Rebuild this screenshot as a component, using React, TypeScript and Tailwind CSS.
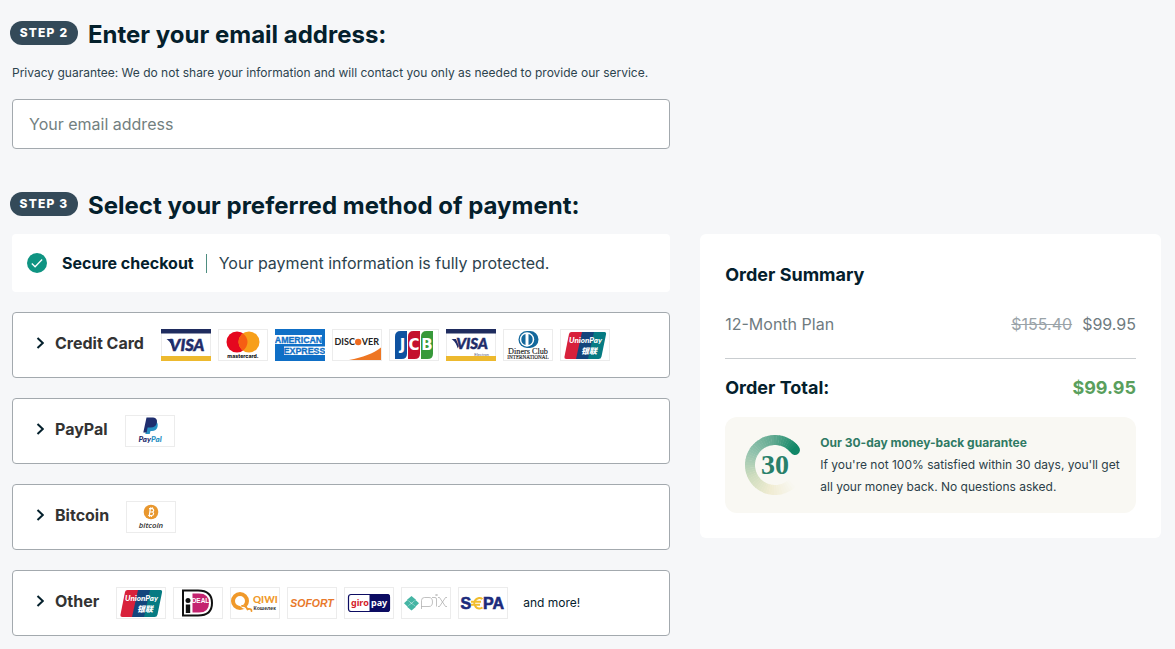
import { useState } from 'react';
import type { ReactNode } from 'react';
import clsx from 'clsx';

function Logo({ title, children, bare }: { title: string; children: ReactNode; bare?: boolean }) {
  return (
    <svg
      viewBox="0 0 50 32"
      role="img"
      aria-label={title}
      className={clsx('h-8 w-[50px] shrink-0 bg-white', !bare && 'outline outline-1 -outline-offset-1 outline-[#ececec]')}
    >
      {children}
    </svg>
  );
}

function VisaLogo({ electron }: { electron?: boolean }) {
  return (
    <Logo title={electron ? 'Visa Electron' : 'Visa'} bare>
      <rect x=".5" y=".5" width="49" height="31" fill="#fff" stroke="#ececec" />
      <rect width="50" height="4.5" fill="#1f2c5f" />
      <rect y="27" width="50" height="5" fill="#edb92e" />
      <path d="M5.500 10h4.500l2.800 7-1 2.500C10.300 14.500 8.500 12 5.500 10z" fill="#1f2c6a" />
      <text
        x="26"
        y={electron ? 20 : 21.5}
        textAnchor="middle"
        fontFamily="Lato, sans-serif"
        fontSize={electron ? 15 : 16.5}
        fontWeight="900"
        fontStyle="italic"
        fill="#1f2c6a"
        stroke="#1f2c6a"
        strokeWidth=".5"
      >
        VISA
      </text>
      {electron && (
        <text x="43" y="26.500" textAnchor="end" fontFamily="Liberation Sans, sans-serif" fontSize="4" fill="#55597a">
          Electron
        </text>
      )}
    </Logo>
  );
}

function MastercardLogo() {
  return (
    <Logo title="Mastercard">
      <circle cx="19" cy="13" r="10.500" fill="#e5071f" />
      <circle cx="31" cy="13" r="10.500" fill="#f79f1a" />
      <path d="M25 4.400a10.500 10.500 0 0 1 0 17.200a10.500 10.500 0 0 1 0-17.200z" fill="#f65e13" />
      <text x="25" y="28.500" textAnchor="middle" fontFamily="Inter, sans-serif" fontSize="5.200" fontWeight="800" fill="#1b1b1b">
        mastercard.
      </text>
    </Logo>
  );
}

function AmexLogo() {
  return (
    <Logo title="American Express" bare>
      <rect width="50" height="32" fill="#0f6fc6" />
      <rect y="6" width="47" height="9" fill="#fff" />
      <rect x="9" y="17.500" width="41" height="8.500" fill="#fff" />
      <g fontFamily="Liberation Sans, sans-serif" fontWeight="700" fill="#0f6fc6" stroke="#0f6fc6" strokeWidth=".3">
        <text x="23.500" y="13.600" textAnchor="middle" fontSize="8.800">
          AMERICAN
        </text>
        <text x="29.500" y="25" textAnchor="middle" fontSize="8.800">
          EXPRESS
        </text>
      </g>
    </Logo>
  );
}

function DiscoverLogo() {
  return (
    <Logo title="Discover">
      <path d="M49 18.500V31H17c14-2.500 24-6.500 32-12.500z" fill="#ee7623" />
      <g fontFamily="Lato, sans-serif" fontSize="9" fontWeight="700" fill="#222">
        <text x="2.500" y="16.300">
          DISC
        </text>
        <text x="47" y="16.300" textAnchor="end">
          VER
        </text>
      </g>
      <circle cx="26.200" cy="13" r="3.200" fill="#ee6b1f" />
    </Logo>
  );
}

function JcbLogo() {
  return (
    <Logo title="JCB">
      <path d="M11.500 2H18v22.500q0 5.500-5.500 5.500H6V7.500Q6 2 11.500 2z" fill="#0f52a0" />
      <path d="M24.500 2H31v22.500q0 5.500-5.500 5.500H19V7.500Q19 2 24.500 2z" fill="#c4122e" />
      <path d="M37.500 2H44v22.500q0 5.500-5.500 5.500H32V7.500Q32 2 37.500 2z" fill="#37993a" />
      <g fontFamily="DejaVu Sans, sans-serif" fontSize="15" fontWeight="700" fill="#fff" textAnchor="middle">
        <text x="13.500" y="21">J</text>
        <text x="25" y="21">C</text>
        <text x="38" y="21">B</text>
      </g>
    </Logo>
  );
}

function DinersLogo() {
  return (
    <Logo title="Diners Club International">
      <path d="M24 2h3a8.500 8.500 0 0 1 0 17h-3z" fill="#14689c" />
      <circle cx="24" cy="10.500" r="8.500" fill="#14689c" />
      <circle cx="24" cy="10.500" r="7.200" fill="#fff" />
      <path d="M22.500 5v11a5.700 5.700 0 0 1 0-11zM25.500 5v11a5.700 5.700 0 0 0 0-11z" fill="#14689c" />
      <g fontFamily="Liberation Serif, serif" fill="#222" stroke="#222" strokeWidth=".15" textAnchor="middle">
        <text x="25" y="24.500" fontSize="8.200">
          Diners Club
        </text>
        <text x="25" y="30" fontSize="5.200">
          INTERNATIONAL
        </text>
      </g>
    </Logo>
  );
}

function UnionPayLogo() {
  return (
    <Logo title="UnionPay">
      <path d="M11.500 3H24l-6 27H6.500Q4 30 4.500 27.500L9 5q.5-2 2.500-2z" fill="#d8213b" />
      <path d="M22 3h13l-6 27H16z" fill="#14457c" />
      <path d="M34 3h10.500q2 0 1.500 2.500L41.500 27.500Q41 30 38.500 30H28z" fill="#067b82" />
      <text x="25.500" y="13.500" textAnchor="middle" fontFamily="Lato, sans-serif" fontSize="8" fontWeight="900" fontStyle="italic" fill="#fff">
        UnionPay
      </text>
      <text x="29" y="24.500" textAnchor="middle" fontFamily="Noto Sans CJK SC, sans-serif" fontSize="8" fontWeight="900" fontStyle="italic" fill="#fff">
        银联
      </text>
    </Logo>
  );
}

function PayPalLogo() {
  return (
    <Logo title="PayPal">
      <path d="M23.500 6h6q4.200 1.200 3 6-1.200 4-5.600 4h-1.400l-.8 3h-4.400z" fill="#2790c3" />
      <path d="M21.500 2.500h6.700q4.600.8 3.700 5.100-1 5-6.300 5h-3L21.700 17.500h-3.400z" fill="#1f2e6e" />
      <text x="25" y="27" textAnchor="middle" fontFamily="Lato, sans-serif" fontSize="8" fontWeight="900" fontStyle="italic" fill="#1f2e6e">
        Pay<tspan fill="#2790c3">Pal</tspan>
      </text>
    </Logo>
  );
}

function BitcoinLogo() {
  return (
    <Logo title="Bitcoin">
      <circle cx="25" cy="11" r="7.300" fill="#e8972e" />
      <path
        d="M22.200 14.500h3.200q2 0 2.200-1.700.1-1.500-1.500-1.800 1.600-.3 1.600-1.800-.1-1.500-2-1.500H23m1.300 0-1 6.800m.4-3.500h2.400M24.800 6.300l-.2 1.200m1.900-1.200-.2 1.200m-2.600 7.200-.2 1.200m2-1.200-.2 1.200"
        fill="none"
        stroke="#fff"
        strokeWidth="1.200"
      />
      <text x="25" y="27" textAnchor="middle" fontFamily="Open Sans, sans-serif" fontSize="7.800" fontWeight="600" fontStyle="italic" fill="#333">
        bitcoin
      </text>
    </Logo>
  );
}

function IdealLogo() {
  return (
    <Logo title="iDEAL">
      <path d="M10 3.500h15q14 0 14 12.500T25 28.500H10z" fill="#fff" stroke="#111" strokeWidth="2" />
      <path d="M19.500 6.500H26q10 0 10 9.500t-10 9.500h-6.500z" fill="#c4236f" />
      <circle cx="15" cy="13.500" r="2.500" fill="#111" />
      <rect x="12.800" y="17.500" width="4.400" height="8.500" fill="#111" />
      <text x="27.500" y="16" textAnchor="middle" fontFamily="Liberation Sans, sans-serif" fontSize="6.500" fontWeight="700" fill="#fff">
        DEAL
      </text>
    </Logo>
  );
}

function QiwiLogo() {
  return (
    <Logo title="QIWI">
      <circle cx="10" cy="14" r="7" fill="none" stroke="#f0992a" strokeWidth="4" />
      <path d="M9 17.500q6-1 7 4-4 1-7-4z" fill="#fff" />
      <path d="M12 19q4-.5 5.500 3.500M18.500 22q3-.3 3 2" fill="none" stroke="#f0992a" strokeWidth="1.800" strokeLinecap="round" />
      <text x="23" y="16" fontFamily="Lato, sans-serif" fontSize="10" fontWeight="900" fill="#f0992a">
        QIWI
      </text>
      <text x="23.500" y="22.500" fontFamily="Liberation Sans, sans-serif" fontSize="5.200" fontWeight="700" fill="#333">
        Кошелек
      </text>
    </Logo>
  );
}

function SofortLogo() {
  return (
    <Logo title="Sofort">
      <text x="25" y="20" textAnchor="middle" fontFamily="Liberation Sans, sans-serif" fontSize="10.500" fontWeight="700" fontStyle="italic" fill="#e8792b">
        SOFORT
      </text>
    </Logo>
  );
}

function GiropayLogo() {
  return (
    <Logo title="giropay">
      <rect x="4.500" y="7.500" width="41" height="17" rx="2.500" fill="#fff" stroke="#0c0c62" strokeWidth="1.200" />
      <path d="M25.500 7H43q3 0 3 3v12q0 3-3 3H25.500z" fill="#0c0c62" />
      <g fontFamily="Noto Sans, sans-serif" fontSize="9" fontWeight="700">
        <text x="24.800" y="18.500" textAnchor="end" fill="#d32027">
          giro
        </text>
        <text x="27" y="18.500" fill="#fff">
          pay
        </text>
      </g>
    </Logo>
  );
}

function PixLogo() {
  return (
    <Logo title="Pix">
      <g fill="#45b5a4">
        <path d="M10.500 9l4.500 3.800-4.500 3.200L6 12.800z" />
        <path d="M10.500 23.500l4.500-3.800-4.500-3.100L6 19.700z" />
        <path d="M3 16.300l3.400-3.200 3.800 3.200-3.800 3.200z" />
        <path d="M18 16.300l-3.400-3.200-3.800 3.200 3.800 3.200z" />
      </g>
      <g fill="none" stroke="#a6a6a6" strokeWidth=".7">
        <path d="M20.500 22V13.500q0-3 3-3h4.500q3.500 0 3.500 4.500t-3.500 4.500H20.500M31 10.500h3q1.500 0 1.500 1.500v7.500M37 10.500h1.500l6 9H46M46 10.500h-1.500l-6 9H37" />
        <path d="M34.500 8l1-1 1 1-1 1z" />
      </g>
    </Logo>
  );
}

function SepaLogo() {
  return (
    <Logo title="SEPA">
      <g fontFamily="Liberation Sans, sans-serif" fontSize="16" fontWeight="700" fill="#1c2b7c" stroke="#1c2b7c" strokeWidth=".6">
        <text x="2.500" y="21.500">S</text>
        <text x="25" y="21.500">PA</text>
      </g>
      <path d="M24.500 12a5.200 5.200 0 1 0 0 8.500M13 14.800h10M13 17.700h9" fill="none" stroke="#f1bd2d" strokeWidth="2" />
    </Logo>
  );
}

const PAYMENT_METHODS = [
  {
    id: 'credit-card',
    label: 'Credit Card',
    logos: (
      <>
        <VisaLogo />
        <MastercardLogo />
        <AmexLogo />
        <DiscoverLogo />
        <JcbLogo />
        <VisaLogo electron />
        <DinersLogo />
        <UnionPayLogo />
      </>
    ),
  },
  { id: 'paypal', label: 'PayPal', logos: <PayPalLogo /> },
  { id: 'bitcoin', label: 'Bitcoin', logos: <BitcoinLogo /> },
  {
    id: 'other',
    label: 'Other',
    note: 'and more!',
    logos: (
      <>
        <UnionPayLogo />
        <IdealLogo />
        <QiwiLogo />
        <SofortLogo />
        <GiropayLogo />
        <PixLogo />
        <SepaLogo />
      </>
    ),
  },
];

function StepHeading({ step, children }: { step: number; children: ReactNode }) {
  return (
    <div className="flex items-start gap-[10px]">
      <span className="flex h-6 w-[68px] shrink-0 items-center justify-center rounded-full bg-[#344a59] text-xs font-extrabold tracking-widest text-white">
        STEP {step}
      </span>
      <h2 className="text-2xl leading-7 font-bold text-[#04202c]">{children}</h2>
    </div>
  );
}

// Ring starts at the upper right and fades out counter-clockwise.
const RING_STOPS = [
  [18, 135, 103],
  [98, 170, 145],
  [145, 194, 173],
  [205, 220, 190],
  [240, 236, 210],
  [249, 248, 243],
];
const RING_SEGMENTS = 50;

function ringPoint(deg: number) {
  const rad = (deg * Math.PI) / 180;
  return `${(30 + 25 * Math.cos(rad)).toFixed(2)} ${(30 - 25 * Math.sin(rad)).toFixed(2)}`;
}

function ringColor(t: number) {
  const pos = t * (RING_STOPS.length - 1);
  const i = Math.min(Math.floor(pos), RING_STOPS.length - 2);
  const mix = RING_STOPS[i].map((c, k) => Math.round(c + (RING_STOPS[i + 1][k] - c) * (pos - i)));
  return `rgb(${mix.join(',')})`;
}

function GuaranteeBadge() {
  const start = 37;
  const sweep = 275 / RING_SEGMENTS;

  return (
    <svg viewBox="0 0 60 60" className="size-[60px] shrink-0" aria-hidden="true">
      {Array.from({ length: RING_SEGMENTS }, (_, i) => (
        <path
          key={i}
          d={`M${ringPoint(start + i * sweep)}A25 25 0 0 0 ${ringPoint(start + (i + 1) * sweep + 1)}`}
          fill="none"
          stroke={ringColor(i / RING_SEGMENTS)}
          strokeWidth="10"
          strokeLinecap={i === 0 ? 'round' : 'butt'}
        />
      ))}
      <text x="30" y="39" textAnchor="middle" fontFamily="Liberation Serif, serif" fontSize="28" fontWeight="700" fill="#28806a">
        30
      </text>
    </svg>
  );
}

function PaymentOption({
  method,
  open,
  onToggle,
}: {
  method: (typeof PAYMENT_METHODS)[number];
  open: boolean;
  onToggle: () => void;
}) {
  return (
    <button
      type="button"
      aria-expanded={open}
      onClick={onToggle}
      className="flex h-[66px] w-full items-center rounded border border-[#a3a9ae] bg-white pr-4 pl-[23px] text-left"
    >
      <span className="flex items-center pb-1">
        <svg viewBox="0 0 8 12" className={clsx('mr-[11px] h-3 w-2', open && 'rotate-90')} aria-hidden="true">
          <path d="M1.500 1 6.800 6l-5.300 5" fill="none" stroke="#04202c" strokeWidth="2" />
        </svg>
        <span className="text-base leading-6 font-bold text-[#333]">{method.label}</span>
      </span>
      <span className="ml-[17px] flex gap-[7px]">{method.logos}</span>
      {method.note && <span className="ml-[15px] text-xs text-[#04202c]">{method.note}</span>}
    </button>
  );
}

function OrderSummary() {
  return (
    <aside className="self-start rounded-md bg-white p-[25px] text-[#04202c]">
      <h3 className="text-lg leading-8 font-bold">Order Summary</h3>
      <div className="mt-[23px] flex justify-between border-b border-[#c9cdd0] pb-6 text-base leading-5 text-[#6f7b7f]">
        <span>12-Month Plan</span>
        <span className="flex gap-[10px]">
          <s className="text-[#9aa3a8]">$155.40</s>
          <span>$99.95</span>
        </span>
      </div>
      <div className="flex justify-between pt-[13px] text-lg leading-8 font-bold">
        <span>Order Total:</span>
        <span className="text-[#5a9f5d]">$99.95</span>
      </div>
      <div className="mt-[13px] flex items-center gap-[15px] rounded-xl bg-[#f9f8f3] py-[15px] pr-2 pl-5">
        <GuaranteeBadge />
        <div className="text-xs leading-[22px] text-[#2c3f49]">
          <p className="font-bold text-[#2f7a64]">Our 30-day money-back guarantee</p>
          <p>If you're not 100% satisfied within 30 days, you'll get all your money back. No questions asked.</p>
        </div>
      </div>
    </aside>
  );
}

export default function App() {
  const [email, setEmail] = useState('');
  const [openMethod, setOpenMethod] = useState<string | null>(null);

  return (
    <main className="min-h-screen bg-[#f6f7f9] pt-[21px] pr-[14px] pb-[13px] pl-[10px] font-['Inter',sans-serif]">
      <StepHeading step={2}>Enter your email address:</StepHeading>
      <div className="mt-[14px] ml-[2px] grid grid-cols-[10fr_7fr] gap-[30px]">
        <div>
          <label htmlFor="email" className="block text-xs leading-5 text-[#2c434e]">
            Privacy guarantee: We do not share your information and will contact you only as needed to provide our service.
          </label>
          <input
            id="email"
            type="email"
            value={email}
            onChange={(e) => setEmail(e.target.value)}
            placeholder="Your email address"
            className="mt-4 block h-[50px] w-full rounded border border-[#a3a9ae] bg-white px-4 text-base text-[#04202c] placeholder:text-[#737f80]"
          />
        </div>
      </div>

      <div className="mt-[43px]">
        <StepHeading step={3}>Select your preferred method of payment:</StepHeading>
      </div>
      <div className="mt-[14px] ml-[2px] grid grid-cols-[10fr_7fr] gap-[30px]">
        <div className="flex flex-col gap-5">
          <div className="flex h-[58px] items-center rounded bg-white px-[15px] text-base text-[#04202c]">
            <svg viewBox="0 0 20 20" className="mr-[15px] size-5" aria-hidden="true">
              <circle cx="10" cy="10" r="10" fill="#0f9482" />
              <path d="M4.800 10.500l3.300 3.300 7-7.300" fill="none" stroke="#fff" strokeWidth="1.300" />
            </svg>
            <strong className="font-bold">Secure checkout</strong>
            <span className="mx-3 h-[19px] w-px bg-[#4e8d80]" />
            <span className="text-[#2c434e]">Your payment information is fully protected.</span>
          </div>
          {PAYMENT_METHODS.map((method) => (
            <PaymentOption
              key={method.id}
              method={method}
              open={openMethod === method.id}
              onToggle={() => setOpenMethod(openMethod === method.id ? null : method.id)}
            />
          ))}
        </div>
        <OrderSummary />
      </div>
    </main>
  );
}
